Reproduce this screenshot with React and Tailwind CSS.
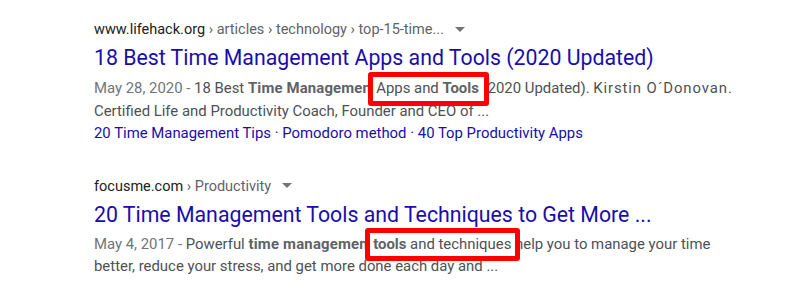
import React from "react";

function Caret() {
  return (
    <span className="inline-block ml-[11px] align-middle w-0 h-0 border-l-[5px] border-r-[5px] border-t-[5px] border-l-transparent border-r-transparent border-t-[#70757a] relative top-[-1px]"></span>
  );
}

function Boxed({ children, l, r, t, b }) {
  return (
    <span className="relative inline-block">
      <span
        className="absolute bg-white border-[5px] border-[#ff0000] rounded-[3px] z-0"
        style={{ left: l, right: r, top: t, bottom: b }}
      ></span>
      <span className="relative z-10">{children}</span>
    </span>
  );
}

export default function App() {
  return (
    <div className="w-[800px] h-[307px] bg-white font-['Roboto',sans-serif] pl-[94px] pt-[20px] overflow-hidden">
      <div>
        <div className="h-[20px] leading-[20px] text-[14.5px] text-[#202124] flex items-center">
          <span>www.lifehack.org</span>
          <span className="text-[#5f6368]">&nbsp;› articles › technology › top-15-time...</span>
          <Caret />
        </div>
        <div className="mt-[5px] h-[26px] leading-[26px] text-[21.3px] text-[#1a0dab] whitespace-nowrap">
          18 Best Time Management Apps and Tools (2020 Updated)
        </div>
        <div className="mt-[6px] text-[14.9px] leading-[22.5px] text-[#4d5156] whitespace-nowrap">
          <div>
            <span className="text-[#70757a]">May 28, 2020 - </span>18 Best{" "}
            <b className="font-bold text-[#5f6368] tracking-[0.15px]">Time Management</b>
            <Boxed l={-8} r={-10} t={-5} b={-6}>
              {" "}Apps and <b className="font-bold text-[#5f6368]">Tools</b>
            </Boxed>{" "}
            (2020 Updated). <span className="tracking-[0.9px]">Kirstin O´Donovan.</span>
          </div>
          <div>Certified Life and Productivity Coach, Founder and CEO of ...</div>
          <div className="text-[#1a0dab]">
            20 Time Management Tips · Pomodoro method · 40 Top Productivity Apps
          </div>
        </div>
      </div>

      <div className="mt-[32px]">
        <div className="h-[20px] leading-[20px] text-[14.5px] text-[#202124] flex items-center">
          <span>focusme.com</span>
          <span className="text-[#5f6368]">&nbsp;› Productivity</span>
          <Caret />
        </div>
        <div className="mt-[5px] h-[26px] leading-[26px] text-[21.3px] text-[#1a0dab] whitespace-nowrap">
          20 Time Management Tools and Techniques to Get More ...
        </div>
        <div className="mt-[5px] text-[14.9px] leading-[22.5px] text-[#4d5156] whitespace-nowrap">
          <div>
            <span className="text-[#70757a]">May 4, 2017 - </span>Powerful{" "}
            <b className="font-bold text-[#5f6368] tracking-[0.2px]">time management</b>
            <Boxed l={-8} r={-9} t={-5} b={-6}>
              {" "}<b className="font-bold text-[#5f6368]">tools</b> and techniques
            </Boxed>{" "}
            help you to manage your time
          </div>
          <div>better, reduce your stress, and get more done each day and ...</div>
        </div>
      </div>
    </div>
  );
}
